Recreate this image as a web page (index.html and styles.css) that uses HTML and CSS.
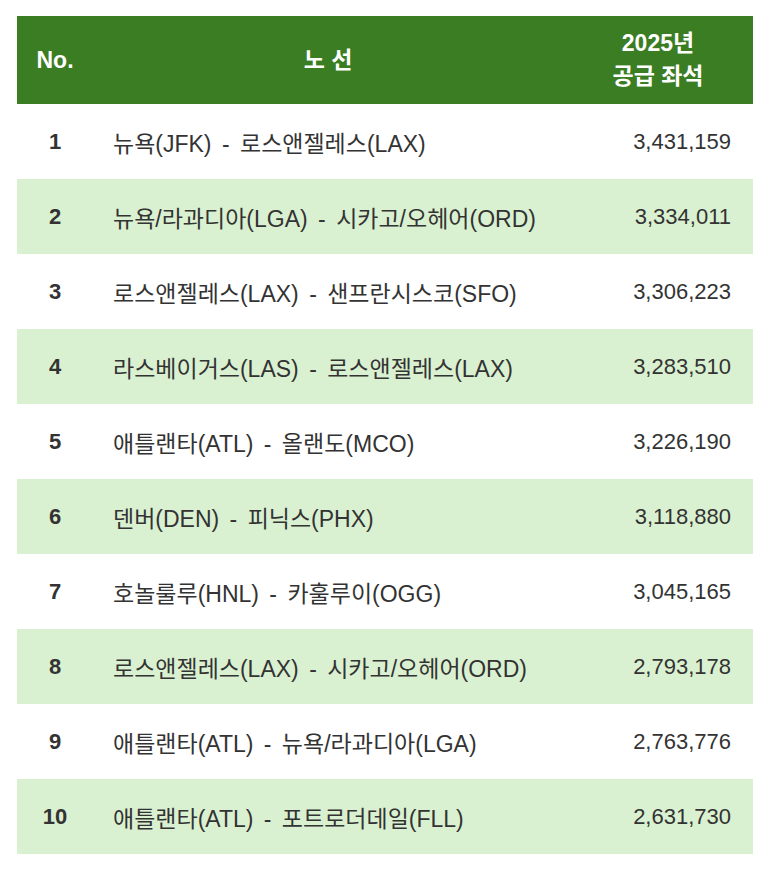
FILE: index.html
```html
<!DOCTYPE html>
<html lang="ko">
<head>
<meta charset="utf-8">
<link rel="stylesheet" href="styles.css">
</head>
<body>
<table class="routes">
  <colgroup>
    <col class="c-no">
    <col class="c-route">
    <col class="c-seats">
  </colgroup>
  <thead>
    <tr>
      <th>No.</th>
      <th>노 선</th>
      <th>2025년<br>공급 좌석</th>
    </tr>
  </thead>
  <tbody>
    <tr><td class="no">1</td><td class="route">뉴욕(JFK) - 로스앤젤레스(LAX)</td><td class="seats">3,431,159</td></tr>
    <tr class="alt"><td class="no">2</td><td class="route">뉴욕/라과디아(LGA) - 시카고/오헤어(ORD)</td><td class="seats">3,334,011</td></tr>
    <tr><td class="no">3</td><td class="route">로스앤젤레스(LAX) - 샌프란시스코(SFO)</td><td class="seats">3,306,223</td></tr>
    <tr class="alt"><td class="no">4</td><td class="route">라스베이거스(LAS) - 로스앤젤레스(LAX)</td><td class="seats">3,283,510</td></tr>
    <tr><td class="no">5</td><td class="route">애틀랜타(ATL) - 올랜도(MCO)</td><td class="seats">3,226,190</td></tr>
    <tr class="alt"><td class="no">6</td><td class="route">덴버(DEN) - 피닉스(PHX)</td><td class="seats">3,118,880</td></tr>
    <tr><td class="no">7</td><td class="route">호놀룰루(HNL) - 카훌루이(OGG)</td><td class="seats">3,045,165</td></tr>
    <tr class="alt"><td class="no">8</td><td class="route">로스앤젤레스(LAX) - 시카고/오헤어(ORD)</td><td class="seats">2,793,178</td></tr>
    <tr><td class="no">9</td><td class="route">애틀랜타(ATL) - 뉴욕/라과디아(LGA)</td><td class="seats">2,763,776</td></tr>
    <tr class="alt"><td class="no">10</td><td class="route">애틀랜타(ATL) - 포트로더데일(FLL)</td><td class="seats">2,631,730</td></tr>
  </tbody>
</table>
</body>
</html>
```
FILE: styles.css
```css
html, body {
  margin: 0;
  padding: 0;
  background: #ffffff;
}
body {
  padding: 16px 18px 0 17px;
  font-family: "Liberation Sans", "Noto Sans CJK KR", sans-serif;
  color: #333333;
}
.routes {
  border-collapse: collapse;
  width: 736px;
  table-layout: fixed;
  font-size: 22px;
}
.c-no { width: 76px; }
.c-route { width: 470px; }
.c-seats { width: 190px; }
.routes thead tr {
  background: #3b7d23;
  height: 88px;
}
.routes th {
  color: #ffffff;
  font-weight: bold;
  font-size: 23px;
  text-align: center;
  line-height: 33px;
  padding: 0;
}
.routes tbody tr {
  height: 75px;
}
.routes tbody tr.alt {
  background: #daf1d1;
}
.routes td {
  padding: 0;
  vertical-align: middle;
}
.no {
  text-align: center;
  font-weight: bold;
  font-size: 22px;
}
.route {
  padding-left: 20px !important;
  text-align: left;
  font-size: 23px;
  word-spacing: 4px;
}
.seats {
  text-align: right;
  padding-right: 22px !important;
}
```
